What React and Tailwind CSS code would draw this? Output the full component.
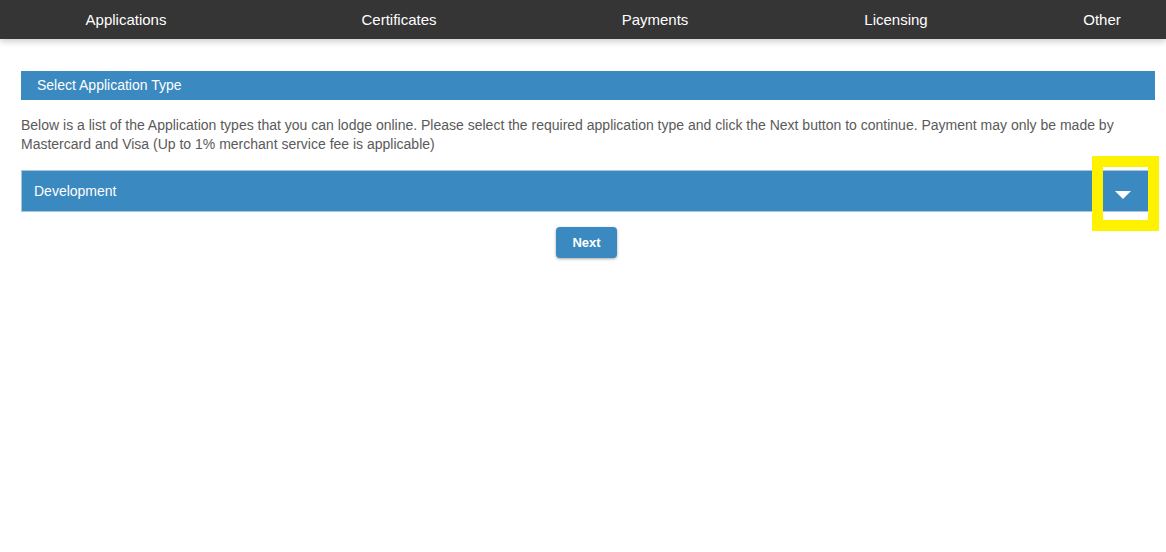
import React from "react";

const navItems = [
  { label: "Applications", cls: "" },
  { label: "Certificates", cls: "" },
  { label: "Payments", cls: "" },
  { label: "Licensing", cls: "" },
  { label: "Other", cls: "pl-[10px]" },
];

export default function App() {
  return (
    <div className="min-h-[552px] bg-white font-['Liberation_Sans',Arial,sans-serif]">
      {/* Top nav */}
      <nav className="h-[39px] bg-[#353535] shadow-[0_3px_6px_rgba(0,0,0,0.18)] grid grid-cols-[252px_294px_218px_264px_1fr] items-center">
        {navItems.map((item) => (
          <a
            key={item.label}
            href="#"
            className={`text-center text-white text-[15px] leading-none ${item.cls}`}
          >
            {item.label}
          </a>
        ))}
      </nav>

      <div className="ml-[21px] w-[1134px] pt-[32px]">
        {/* Section header */}
        <div className="h-[29px] bg-[#3a89c0] flex items-center pl-[16px] text-white text-[14px]">
          Select Application Type
        </div>

        <p className="mt-[16px] text-[14px] leading-[19px] text-[#5a5a5a] pr-[8px]">
          Below is a list of the Application types that you can lodge online. Please select the required
          application type and click the Next button to continue. Payment may only be made by Mastercard and
          Visa (Up to 1% merchant service fee is applicable)
        </p>

        {/* Dropdown */}
        <div className="relative mt-[16px] w-[1128px]">
          <div className="h-[42px] bg-[#3a89c0] border border-[#a9c7dc] flex items-center justify-between pl-[12px] pr-[17px] text-white text-[14px]">
            <span>Development</span>
            <svg width="16" height="8" viewBox="0 0 16 8" className="mt-[8px]">
              <polygon points="0,0 16,0 8,8" fill="#ffffff" />
            </svg>
          </div>
          {/* highlight annotation */}
          <div className="absolute left-[1071px] top-[-14px] w-[67px] h-[75px] border-[11px] border-[#fff200]" />
        </div>

        <div className="flex justify-center mt-[15px] pr-[3px]">
          <button className="w-[61px] h-[31px] rounded-[4px] bg-[#3a89c0] text-white text-[13px] font-bold shadow-[0_1px_3px_rgba(0,0,0,0.35)]">
            Next
          </button>
        </div>
      </div>
    </div>
  );
}
